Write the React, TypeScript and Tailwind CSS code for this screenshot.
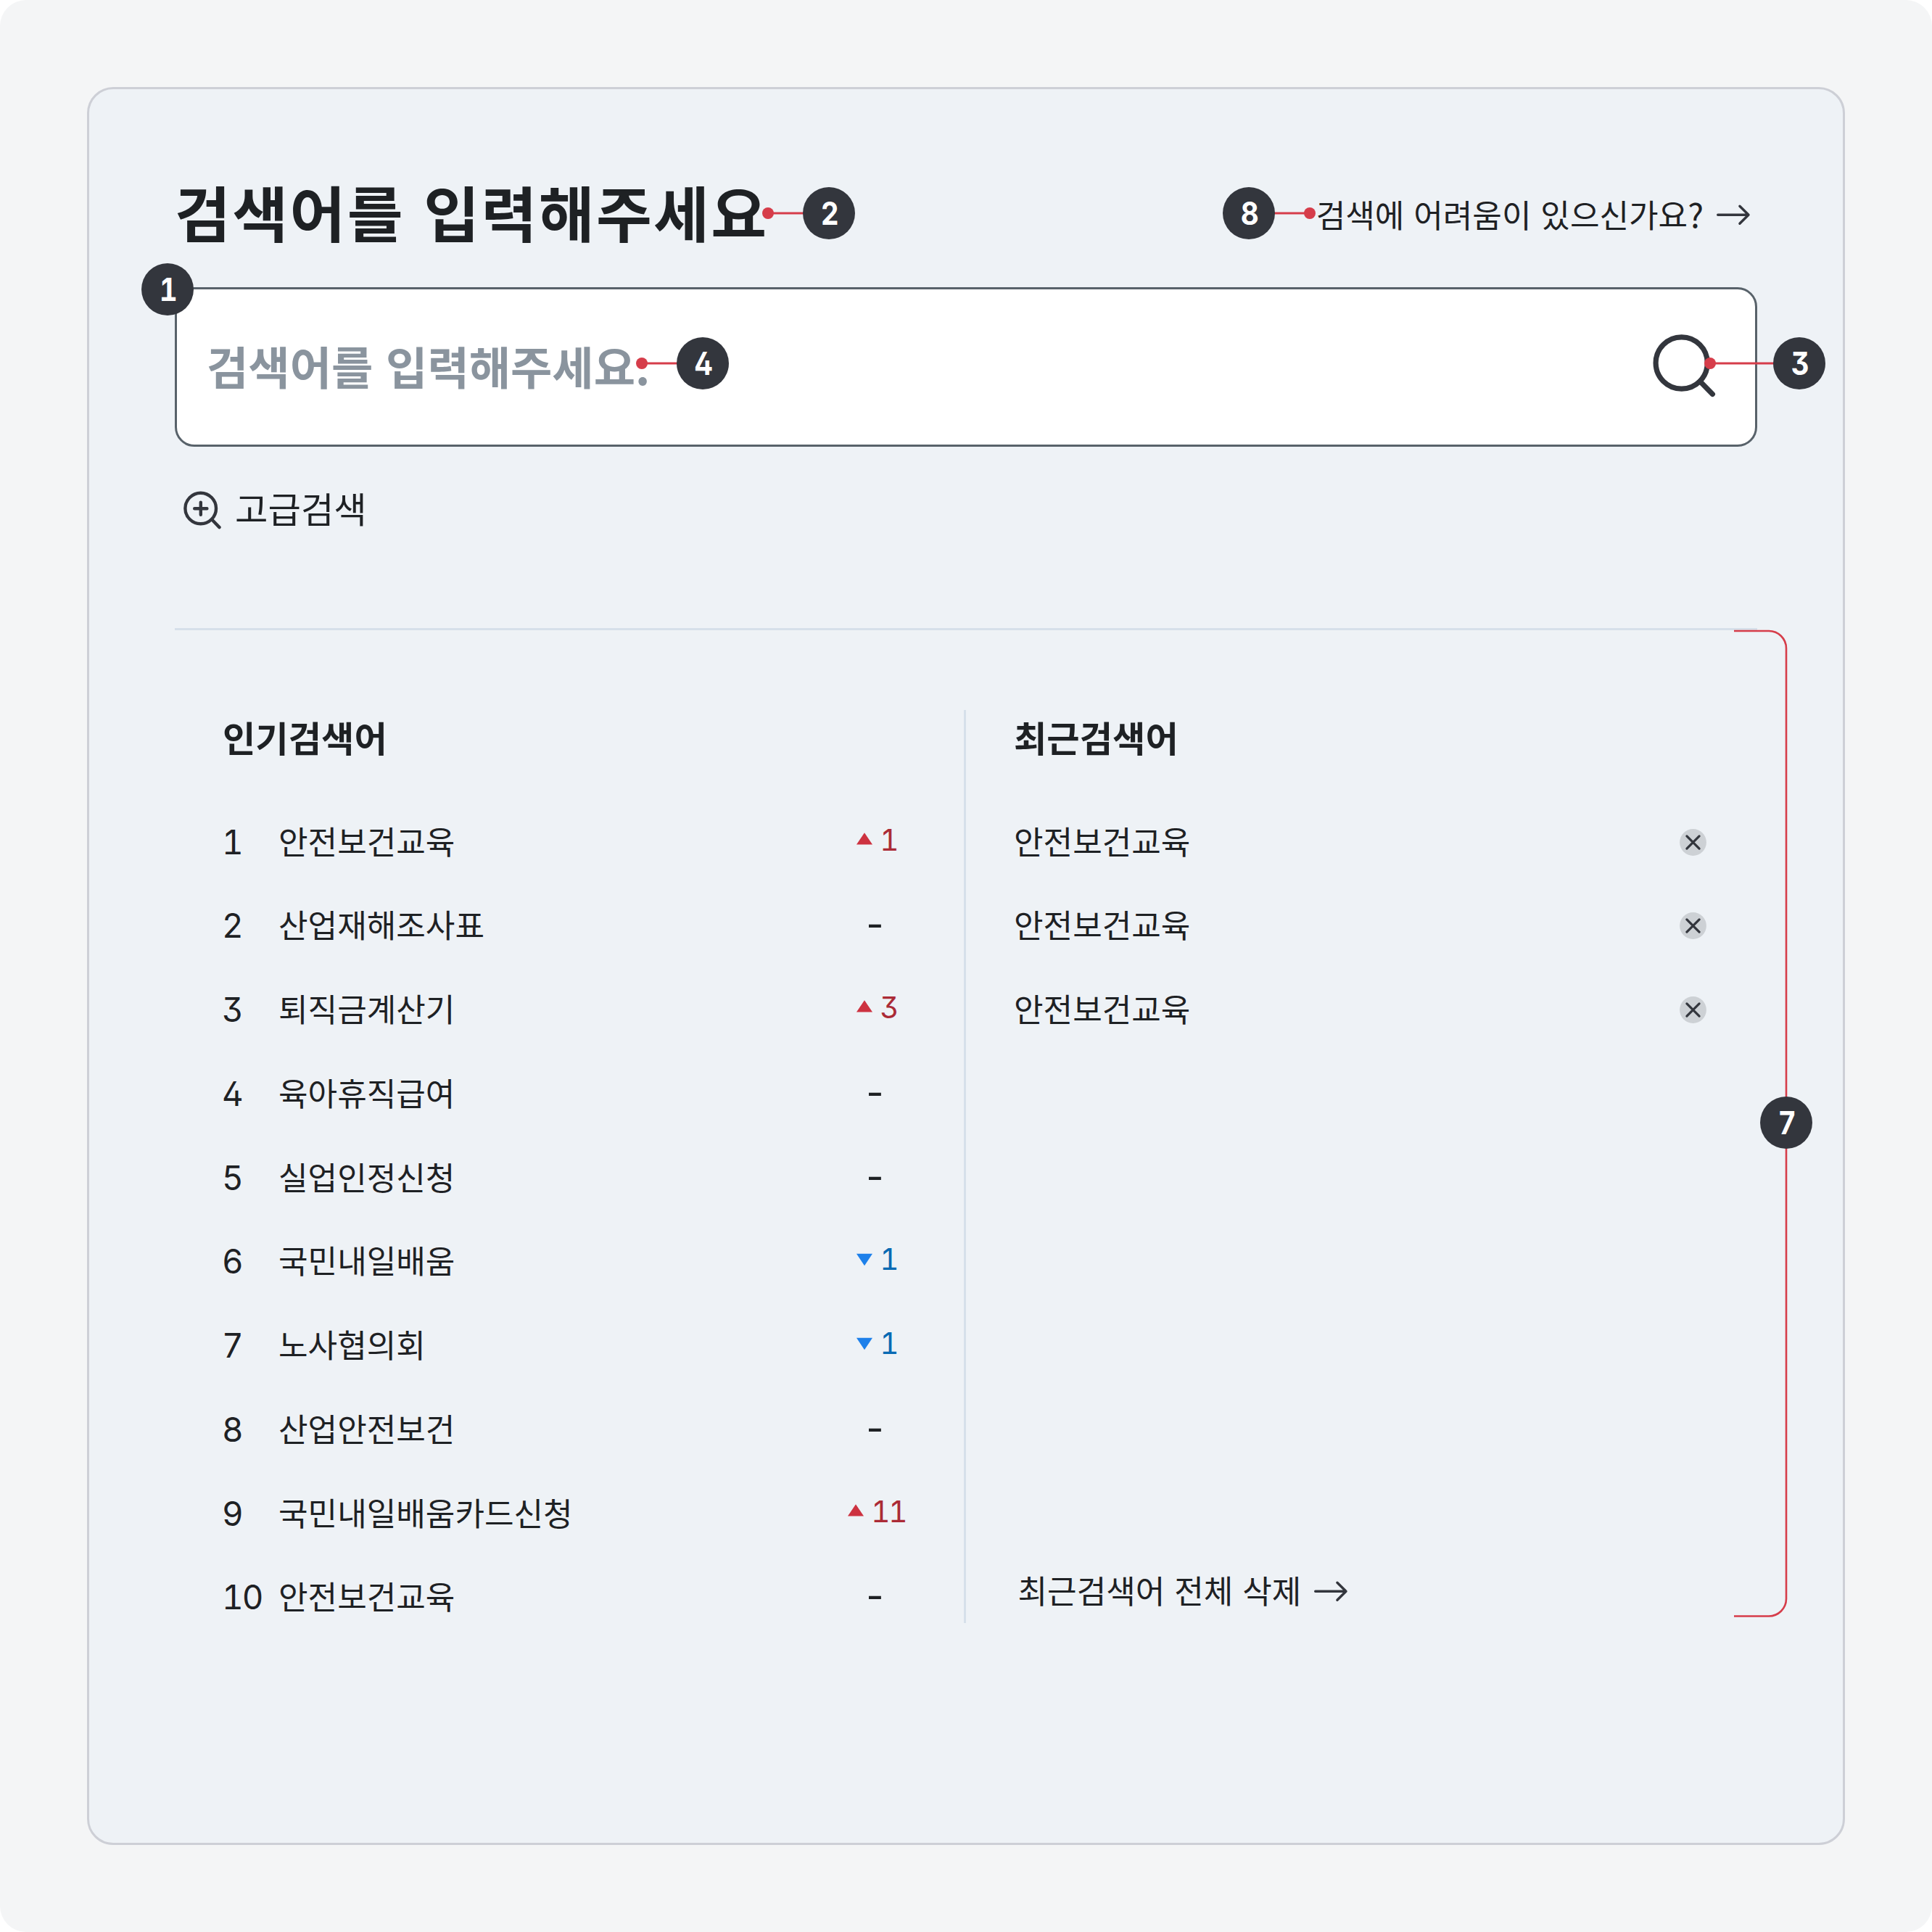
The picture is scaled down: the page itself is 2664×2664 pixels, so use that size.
type Trend = { dir: "up" | "down" | "none"; value?: string };

const popular: { name: string; trend: Trend }[] = [
  { name: "안전보건교육", trend: { dir: "up", value: "1" } },
  { name: "산업재해조사표", trend: { dir: "none" } },
  { name: "퇴직금계산기", trend: { dir: "up", value: "3" } },
  { name: "육아휴직급여", trend: { dir: "none" } },
  { name: "실업인정신청", trend: { dir: "none" } },
  { name: "국민내일배움", trend: { dir: "down", value: "1" } },
  { name: "노사협의회", trend: { dir: "down", value: "1" } },
  { name: "산업안전보건", trend: { dir: "none" } },
  { name: "국민내일배움카드신청", trend: { dir: "up", value: "11" } },
  { name: "안전보건교육", trend: { dir: "none" } },
];

const recent = ["안전보건교육", "안전보건교육", "안전보건교육"];

// Numbered callouts, placed by the centre of each badge.
const badges = [
  { n: "1", x: 231, y: 399 },
  { n: "2", x: 1143, y: 294 },
  { n: "3", x: 2481, y: 501 },
  { n: "4", x: 969, y: 501 },
  { n: "7", x: 2463, y: 1548 },
  { n: "8", x: 1722, y: 294 },
];

// Leader lines from a badge to the dot on the annotated element.
const leaders = [
  { dot: 1059, end: 1143, y: 294 },
  { dot: 1806, end: 1722, y: 294 },
  { dot: 885, end: 969, y: 501 },
  { dot: 2358, end: 2481, y: 501 },
];

function ArrowLink({ children }: { children: React.ReactNode }) {
  return (
    <div className="flex h-[64px] items-center gap-[17px] text-[44.1px] leading-[64px] [word-spacing:3px]">
      <span className="whitespace-nowrap">{children}</span>
      <svg width="48" height="48" viewBox="0 0 48 48" fill="none" stroke="#33363D" strokeWidth="3.4" strokeLinecap="round" strokeLinejoin="round">
        <path d="M2.7 26.3H45M32.9 14.3 45 26.3 32.9 38.3" />
      </svg>
    </div>
  );
}

function TrendCell({ dir, value }: Trend) {
  if (dir === "none") {
    return <div className="w-[120px] pr-[5px] text-center font-['Inter',sans-serif] text-[53px] leading-[64px]">-</div>;
  }
  const up = dir === "up";
  return (
    <div className={`flex w-[120px] items-center justify-center gap-[10.5px] ${up ? "text-[#AB2B36]" : "text-[#096AB3]"}`}>
      <svg width="22" height="24" viewBox="0 0 22 24" fill={up ? "#CD3240" : "#1D80EA"}>
        <path d={up ? "M0 17.5H22L11 1.2Z" : "M0 3.7H22L11 20.2Z"} />
      </svg>
      <span className="font-['Inter',sans-serif] text-[40.5px] leading-[48px] tracking-[-0.055em] [font-feature-settings:'tnum','cv02','cv09']">
        {value}
      </span>
    </div>
  );
}

function CloseIcon() {
  return (
    <svg width="37" height="42" viewBox="0 0 37 42">
      <circle cx="18.5" cy="23.5" r="18.4" fill="#CDD1D5" />
      <path d="M9.9 14.9 27.1 32.1M27.1 14.9 9.9 32.1" stroke="#33363D" strokeWidth="3.2" strokeLinecap="round" />
    </svg>
  );
}

export default function App() {
  return (
    <div className="relative h-[2664px] w-[2664px] overflow-hidden rounded-[36px] bg-[#F4F5F6] p-[120px] font-['Noto_Sans_CJK_KR',sans-serif] text-[#1E2124]">
      <main className="flex h-[2424px] flex-col rounded-[36px] border-[3px] border-[#CDCFD6] bg-[#EEF2F6] px-[118px] pt-[116px]">
        <header className="flex h-[104px] items-start justify-between">
          <h1 className="text-[83.5px] font-bold leading-[103px] tracking-[2.4px] [word-spacing:5px]">검색어를 입력해주세요</h1>
          <div className="pr-[9px] pt-[23px]">
            <ArrowLink>
              검색에 어려움이 있으신가요<span className="text-[46px]">?</span>
            </ArrowLink>
          </div>
        </header>

        <div className="mt-[53px] flex h-[220px] items-center justify-between rounded-[27px] border-[3px] border-[#58626A] bg-white pl-[41px] pr-[52px]">
          <span className="pb-[5px] text-[62.3px] font-bold leading-[90px] text-[#8A949E] [word-spacing:3.7px]">검색어를 입력해주세요.</span>
          <svg width="96" height="96" viewBox="0 0 96 96" fill="none" stroke="#33363D" strokeWidth="7.2" strokeLinecap="round">
            <circle cx="46.7" cy="42.5" r="35.6" />
            <path d="M72 67.7 89.4 85.5" />
          </svg>
        </div>

        <div className="ml-[7px] mt-[48px] flex h-[72px] items-center gap-[16px] text-[49.4px] leading-[72px]">
          <svg width="60" height="60" viewBox="0 0 60 60" fill="none" stroke="#33363D" strokeWidth="4.4" strokeLinecap="round">
            <circle cx="28.7" cy="31" r="21.3" />
            <path d="M44 46.3 54.5 57.1M20.2 31.2H37.4M28.8 22.6V39.8" />
          </svg>
          <span>고급검색</span>
        </div>

        <div className="mt-[130px] h-[3px] bg-[#D6E0EA]" />

        <div className="flex pt-[110px]">
          <section className="w-[1088px] pl-[65px] pr-[60px]">
            <h2 className="pl-px text-[49.3px] font-bold leading-[73px]">인기검색어</h2>
            <ol className="mt-[48.7px]">
              {popular.map((item, i) => (
                <li key={i} className="flex h-[115.75px] items-center justify-between text-[44.1px] leading-[64px]">
                  <div className="flex items-baseline">
                    <span className="w-[78px] font-['Inter',sans-serif] text-[45.8px] leading-none tracking-[-0.045em] [font-feature-settings:'tnum','cv02','cv09']">
                      {i + 1}
                    </span>
                    <span>{item.name}</span>
                  </div>
                  <TrendCell {...item.trend} />
                </li>
              ))}
            </ol>
          </section>

          <div className="h-[1259px] w-[3px] bg-[#D6E0EA]" />

          <section className="flex h-[1259px] flex-1 flex-col pb-[14px] pl-[66px] pr-[70px]">
            <h2 className="text-[49.3px] font-bold leading-[73px]">최근검색어</h2>
            <ul className="mt-[48.7px]">
              {recent.map((name, i) => (
                <li key={i} className="flex h-[115.75px] items-center justify-between text-[44.1px] leading-[64px]">
                  <span>{name}</span>
                  <CloseIcon />
                </li>
              ))}
            </ul>
            <div className="mt-auto pl-[5.5px]">
              <ArrowLink>최근검색어 전체 삭제</ArrowLink>
            </div>
          </section>
        </div>
      </main>

      <svg className="absolute inset-0" width="2664" height="2664" viewBox="0 0 2664 2664" fill="none" stroke="#D63D4A" strokeWidth="3">
        <path d="M2391 870H2439A24 24 0 0 1 2463 894V2204.5A24 24 0 0 1 2439 2228.5H2391" strokeWidth="2.6" />
        {leaders.map((l) => (
          <g key={l.dot}>
            <path d={`M${l.dot} ${l.y}H${l.end}`} />
            <circle cx={l.dot} cy={l.y} r="8" fill="#D63D4A" stroke="none" />
          </g>
        ))}
      </svg>
      {badges.map((b) => (
        <div
          key={b.n}
          className="absolute flex size-[72px] -translate-x-1/2 -translate-y-1/2 items-center justify-center rounded-full bg-[#33363D] pl-[2px] pt-px font-['Inter',sans-serif] text-[44.4px] font-bold leading-none text-white [font-feature-settings:'tnum','cv02','cv09']"
          style={{ left: b.x, top: b.y }}
        >
          <span className="scale-x-[0.87]">{b.n}</span>
        </div>
      ))}
    </div>
  );
}
